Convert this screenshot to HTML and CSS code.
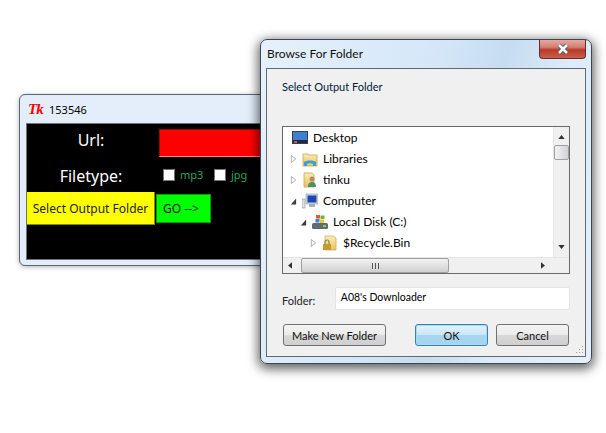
FILE: index.html

```html
<!DOCTYPE html>
<html lang="en">
<head>
  <meta charset="UTF-8">
  <title>Browse For Folder</title>
  <link rel="stylesheet" href="styles.css">
</head>
<body>
  <svg class="defs" width="0" height="0">
    <defs>
      <linearGradient id="folderFill" x1="0" y1="0" x2="0" y2="1">
        <stop offset="0" stop-color="#fbeeb0"/>
        <stop offset="1" stop-color="#e6c265"/>
      </linearGradient>
      <symbol id="folder" viewBox="0 0 16 16">
        <path d="M1 3h5l1 1h8v11H1z" fill="url(#folderFill)" stroke="#c9a552" stroke-width=".8"/>
      </symbol>
    </defs>
  </svg>

  <div class="desktop">
    <!-- tk app window -->
    <div class="tk-window">
      <div class="tk-title">
        <span class="tk-logo">Tk</span>
        <span>153546</span>
      </div>
      <div class="tk-body">
        <div class="tk-row url-row">
          <span class="tk-label">Url:</span>
          <div class="url-entry"></div>
        </div>
        <div class="tk-row type-row">
          <span class="tk-label">Filetype:</span>
          <div class="checks">
            <span class="check"></span><span class="check-text">mp3</span>
            <span class="check"></span><span class="check-text">jpg</span>
          </div>
        </div>
        <div class="tk-buttons">
          <div class="btn-yellow">Select Output Folder</div>
          <div class="btn-green">GO --&gt;</div>
        </div>
      </div>
    </div>

    <!-- folder dialog -->
    <div class="dialog">
      <div class="dialog-title">
        <span>Browse For Folder</span>
        <div class="close">
          <svg width="18" height="12" viewBox="0 0 18 12">
            <path d="M5 2l8 8M13 2l-8 8" stroke="#4b5260" stroke-width="4.4" fill="none"/>
            <path d="M5 2l8 8M13 2l-8 8" stroke="#fff" stroke-width="2.6" fill="none"/>
          </svg>
        </div>
      </div>
      <div class="dialog-body">
        <p class="prompt">Select Output Folder</p>

        <div class="tree">
          <div class="tree-view">
            <ul class="tree-list">
              <li class="row lvl0">
                <svg class="icon" viewBox="0 0 16 16">
                  <rect x="0" y="1" width="16" height="13" fill="#3a3f4a"/>
                  <rect x="1" y="2" width="14" height="8" fill="#3f7fd0"/>
                  <rect x="1" y="10" width="14" height="3" fill="#1d2a44"/>
                  <rect x="2" y="11" width="3" height="2" fill="#d8553a"/>
                </svg>
                <span>Desktop</span>
              </li>
              <li class="row lvl1">
                <svg class="arrow" viewBox="0 0 8 10"><path d="M1.500 1l5 4-5 4z" fill="#fff" stroke="#a6a6a6"/></svg>
                <svg class="icon" viewBox="0 0 16 16">
                  <use href="#folder"/>
                  <path d="M2 15v-4c2-2 10-2 12 0v4h-3v-2c-1-1-5-1-6 0v2z" fill="#3f9fd8"/>
                </svg>
                <span>Libraries</span>
              </li>
              <li class="row lvl1">
                <svg class="arrow" viewBox="0 0 8 10"><path d="M1.500 1l5 4-5 4z" fill="#fff" stroke="#a6a6a6"/></svg>
                <svg class="icon" viewBox="0 0 16 16">
                  <path d="M2 1h8l2 2v12H2z" fill="url(#folderFill)" stroke="#c9a552" stroke-width=".8"/>
                  <circle cx="10" cy="7" r="2.500" fill="#b98a63"/>
                  <path d="M6 15c0-4 2-5 4-5s4 1 4 5z" fill="#4e8f68"/>
                </svg>
                <span>tinku</span>
              </li>
              <li class="row lvl1">
                <svg class="arrow" viewBox="0 0 8 10"><path d="M7 2v7H1z" fill="#3c3c3c"/></svg>
                <svg class="icon" viewBox="0 0 16 16">
                  <rect x="0" y="6" width="3" height="9" fill="#dfe3e6" stroke="#8f979c" stroke-width=".6"/>
                  <rect x="4" y="1" width="12" height="10" fill="#d4d9dc" stroke="#8c9498" stroke-width=".6"/>
                  <rect x="5.500" y="2.500" width="9" height="7" fill="#1747b5"/>
                  <rect x="7" y="11" width="6" height="3" fill="#a9b0b4"/>
                </svg>
                <span>Computer</span>
              </li>
              <li class="row lvl2">
                <svg class="arrow" viewBox="0 0 8 10"><path d="M7 2v7H1z" fill="#3c3c3c"/></svg>
                <svg class="icon" viewBox="0 0 16 16">
                  <rect x="0" y="9" width="16" height="6" rx="1.500" fill="#5f6b70"/>
                  <rect x="11" y="11" width="3" height="2" fill="#7fd35c"/>
                  <rect x="4" y="1" width="4" height="3.500" fill="#e2592c"/>
                  <rect x="8.500" y="1.500" width="4" height="3.500" fill="#6db33f"/>
                  <rect x="3.500" y="5" width="4" height="3.500" fill="#3b82d6"/>
                  <rect x="8" y="5.500" width="4" height="3.500" fill="#f2c230"/>
                </svg>
                <span>Local Disk (C:)</span>
              </li>
              <li class="row lvl3">
                <svg class="arrow" viewBox="0 0 8 10"><path d="M1.500 1l5 4-5 4z" fill="#fff" stroke="#a6a6a6"/></svg>
                <svg class="icon" viewBox="0 0 16 16">
                  <path d="M3 1h8l3 2v12H3z" fill="url(#folderFill)" stroke="#d0ae5b" stroke-width=".8"/>
                  <rect x="1" y="9" width="8" height="6" fill="#c79a2c"/>
                  <path d="M3 9V7a2 2 0 0 1 4 0v2" fill="none" stroke="#8a8064" stroke-width="1.200"/>
                </svg>
                <span>$Recycle.Bin</span>
              </li>
              <li class="row lvl3">
                <span class="arrow"></span>
                <svg class="icon" viewBox="0 0 16 16"><use href="#folder"/></svg>
              </li>
            </ul>
            <div class="vscroll">
              <svg class="sb-arrow" viewBox="0 0 8 5"><path d="M4 0l4 5H0z" fill="#333"/></svg>
              <div class="vthumb"></div>
              <svg class="sb-arrow down" viewBox="0 0 8 5"><path d="M0 0h8L4 5z" fill="#333"/></svg>
            </div>
          </div>
          <div class="hscroll">
            <svg class="sb-arrow-h" viewBox="0 0 5 8"><path d="M5 0v8L0 4z" fill="#333"/></svg>
            <div class="hthumb"><span class="grip-lines"></span></div>
            <svg class="sb-arrow-h right" viewBox="0 0 5 8"><path d="M0 0v8l5-4z" fill="#333"/></svg>
          </div>
        </div>

        <div class="folder-row">
          <span class="folder-label">Folder:</span>
          <div class="folder-input">A08's Downloader</div>
        </div>

        <div class="actions">
          <button class="btn btn-new">Make New Folder</button>
          <button class="btn btn-ok">OK</button>
          <button class="btn">Cancel</button>
        </div>
        <svg class="size-grip" width="10" height="10" viewBox="0 0 10 10">
          <path d="M8 1h1v1H8zM5 4h1v1H5zM8 4h1v1H8zM2 7h1v1H2zM5 7h1v1H5zM8 7h1v1H8z" fill="#9a9a9a"/>
        </svg>
      </div>
    </div>
  </div>
</body>
</html>
```

FILE: styles.css

```css
body {
  margin: 0;
  background: #fff;
  font-family: "Lato", "Noto Sans", sans-serif;
  font-size: 12px;
  color: #000;
}
.defs {
  position: absolute;
}
.desktop {
  position: relative;
  width: 606px;
  height: 433px;
  overflow: hidden;
}

/* tk window */
.tk-window {
  position: absolute;
  left: 19px;
  top: 94px;
  width: 300px;
  height: 172px;
  box-sizing: border-box;
  display: flex;
  flex-direction: column;
  padding: 0 6px 5px;
  background: #e3eefa;
  border: 1px solid #5c6670;
  border-radius: 6px;
  box-shadow: 0 1px 5px rgba(0, 0, 0, 0.3);
}
.tk-title {
  height: 28px;
  flex: none;
  display: flex;
  align-items: center;
  gap: 6px;
  padding-left: 2px;
  font-family: "Noto Sans", sans-serif;
  font-size: 11px;
}
.tk-logo {
  width: 15px;
  color: #f00;
  font-family: "Liberation Serif", serif;
  font-size: 15px;
  font-weight: bold;
  font-style: italic;
  letter-spacing: -1px;
}
.tk-body {
  flex: 1;
  background: #000;
  border: 1px solid #6d7378;
  border-right: 0;
  color: #fff;
  font-family: "Noto Sans", sans-serif;
}
.tk-row {
  display: flex;
  align-items: center;
}
.tk-label {
  width: 132px;
  flex: none;
  box-sizing: border-box;
  padding-right: 4px;
  text-align: center;
  font-size: 16px;
}
.url-row {
  height: 35px;
  padding-top: 3px;
  box-sizing: border-box;
}
.url-row .tk-label {
  margin-top: -6px;
}
.url-entry {
  width: 200px;
  height: 28px;
  flex: none;
  box-sizing: border-box;
  background: #f00;
  border-top: 1px solid #a00;
  border-left: 1px solid #a00;
  border-bottom: 1px solid #ff8a8a;
}
.type-row {
  height: 33px;
}
.checks {
  display: flex;
  align-items: center;
  padding-left: 4px;
  margin-top: -2px;
}
.check {
  width: 10px;
  height: 10px;
  background: #fff;
  border: 1px solid #777;
}
.check-text {
  width: 34px;
  padding-left: 5px;
  color: #2aa55a;
  font-size: 11px;
}
.tk-buttons {
  display: flex;
  align-items: center;
  gap: 1px;
}
.btn-yellow {
  width: 128px;
  height: 33px;
  box-sizing: border-box;
  display: flex;
  align-items: center;
  justify-content: center;
  background: #ff0;
  border-right: 1px solid #8a8a00;
  border-bottom: 1px solid #8a8a00;
  color: #222;
  white-space: nowrap;
}
.btn-green {
  width: 55px;
  height: 29px;
  box-sizing: border-box;
  padding-left: 6px;
  display: flex;
  align-items: center;
  background: #0f0;
  border: 1px solid #0a9a0a;
  color: #111;
}

/* browse dialog */
.dialog {
  position: absolute;
  left: 260px;
  top: 39px;
  width: 332px;
  height: 325px;
  box-sizing: border-box;
  display: flex;
  flex-direction: column;
  padding: 0 5px 6px;
  background: linear-gradient(105deg, #e6f1fc 0%, #d3e6f8 45%, #c6dcf0 60%, #dcebfa 75%, #e4f0fc 100%);
  border: 1px solid #3c4650;
  border-radius: 7px;
  box-shadow: 0 3px 11px 2px rgba(0, 0, 0, 0.62);
}
.dialog-title {
  position: relative;
  height: 28px;
  flex: none;
  display: flex;
  align-items: center;
  padding: 0 0 2px 1px;
  box-sizing: border-box;
  font-size: 12px;
  color: #111;
}
.close {
  position: absolute;
  top: 0;
  right: 0;
  width: 47px;
  height: 19px;
  display: flex;
  align-items: center;
  justify-content: center;
  background: linear-gradient(#e8a79e 0%, #d27f73 40%, #b93a26 55%, #c9604e 100%);
  border: 1px solid #6e2a24;
  border-top: 0;
  border-radius: 0 0 4px 4px;
  box-sizing: border-box;
}
.dialog-body {
  position: relative;
  flex: 1;
  box-sizing: border-box;
  padding: 10px 15px 0;
  background: #f0f0f0;
  border: 1px solid #5f6a72;
  font-size: 11px;
}
.prompt {
  margin: 0;
  height: 47px;
  line-height: 15px;
  color: #001a3c;
}

/* tree box */
.tree {
  width: 288px;
  height: 148px;
  box-sizing: border-box;
  display: flex;
  flex-direction: column;
  background: #fff;
  border: 1px solid #6a6a6a;
}
.tree-view {
  flex: 1;
  min-height: 0;
  display: flex;
}
.tree-list {
  flex: 1;
  margin: 0;
  padding: 0;
  list-style: none;
  overflow: hidden;
}
.row {
  height: 21px;
  display: flex;
  align-items: center;
  gap: 5px;
  font-size: 12px;
  white-space: nowrap;
}
.lvl0 {
  padding-left: 9px;
}
.lvl1 {
  padding-left: 7px;
}
.lvl2 {
  padding-left: 17px;
}
.lvl3 {
  padding-left: 27px;
}
.arrow {
  width: 7px;
  height: 10px;
  flex: none;
}
.icon {
  width: 16px;
  height: 16px;
  flex: none;
}
.vscroll {
  width: 16px;
  flex: none;
  display: flex;
  flex-direction: column;
  align-items: center;
  padding-top: 8px;
  box-sizing: border-box;
  background: #f0f0f0;
  border-left: 1px solid #e6e6e6;
}
.sb-arrow {
  width: 7px;
  height: 4px;
  flex: none;
}
.sb-arrow.down {
  margin-top: auto;
  margin-bottom: 8px;
}
.vthumb {
  width: 15px;
  height: 15px;
  margin-top: 6px;
  box-sizing: border-box;
  background: linear-gradient(90deg, #f2f2f2, #d2d2d6);
  border: 1px solid #a0a0a0;
  border-radius: 2px;
}
.hscroll {
  height: 16px;
  flex: none;
  box-sizing: border-box;
  display: flex;
  align-items: center;
  padding: 0 24px 0 5px;
  background: #f0f0f0;
  border-top: 1px solid #e6e6e6;
}
.sb-arrow-h {
  width: 4px;
  height: 7px;
  flex: none;
}
.sb-arrow-h.right {
  margin-left: auto;
}
.hthumb {
  width: 148px;
  height: 15px;
  margin-left: 9px;
  box-sizing: border-box;
  display: flex;
  align-items: center;
  justify-content: center;
  background: linear-gradient(#f2f2f2, #d0d0d0);
  border: 1px solid #a0a0a0;
  border-radius: 2px;
}
.grip-lines {
  width: 7px;
  height: 6px;
  background: repeating-linear-gradient(90deg, #555 0 1px, transparent 1px 3px);
}

/* bottom of dialog */
.folder-row {
  display: flex;
  align-items: center;
  margin-top: 13px;
  height: 23px;
}
.folder-label {
  width: 53px;
  padding-top: 4px;
  color: #222;
}
.folder-input {
  width: 236px;
  height: 23px;
  box-sizing: border-box;
  padding: 0 0 4px 5px;
  display: flex;
  align-items: center;
  background: #fff;
  border: 1px solid #e3e3e3;
  border-radius: 2px;
  font-size: 10.500px;
}
.actions {
  display: flex;
  gap: 8px;
  margin-top: 14px;
}
.btn {
  width: 73px;
  height: 22px;
  padding: 0;
  font: inherit;
  color: #111;
  background: linear-gradient(#f4f4f4 0%, #ebebeb 48%, #d8d8d8 52%, #cfcfcf 100%);
  border: 1px solid #707070;
  border-radius: 3px;
}
.btn-new {
  width: 103px;
  margin-left: 1px;
  margin-right: 21px;
}
.btn-ok {
  background: linear-gradient(#e4f3fb 0%, #c9e6f6 48%, #a8d6f0 52%, #a6d4ee 100%);
  border-color: #3c7fb1;
  box-shadow: inset 0 0 0 1px #9fdcf5;
}
.size-grip {
  position: absolute;
  right: 1px;
  bottom: 1px;
}
```
